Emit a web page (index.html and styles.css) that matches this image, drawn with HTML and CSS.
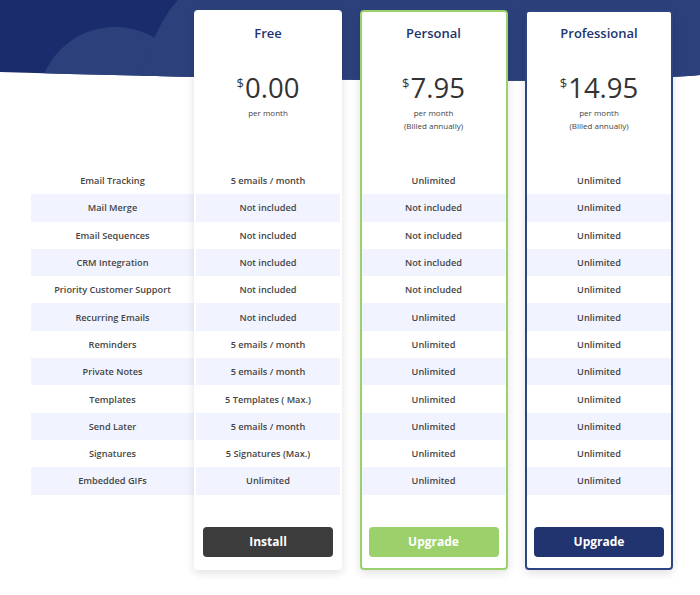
FILE: index.html
```html
<html>
    <head>
        <title>Plans and pricing</title>
        <link rel="stylesheet" href="styles.css">
    </head>
    <body>
        <div class="hero">
            <svg width="700" height="90" viewBox="0 0 700 90">
                <defs>
                    <clipPath id="band">
                        <path d="M0,0 H700 V75 Q560,88 0,72 Z"/>
                    </clipPath>
                </defs>
                <g clip-path="url(#band)">
                    <rect x="0" y="0" width="700" height="90" fill="#1b2c6c"/>
                    <circle cx="115" cy="104" r="77" fill="#2c417b"/>
                    <path d="M178,0 Q152,28 138,90 H700 V0 Z" fill="#2c417b"/>
                </g>
            </svg>
        </div>

        <div class="plans">
            <div class="features">
                <div class="row">Email Tracking</div>
                <div class="row">Mail Merge</div>
                <div class="row">Email Sequences</div>
                <div class="row">CRM Integration</div>
                <div class="row">Priority Customer Support</div>
                <div class="row">Recurring Emails</div>
                <div class="row">Reminders</div>
                <div class="row">Private Notes</div>
                <div class="row">Templates</div>
                <div class="row">Send Later</div>
                <div class="row">Signatures</div>
                <div class="row">Embedded GIFs</div>
            </div>

            <div class="card card-free">
                <div class="head">
                    <h2>Free</h2>
                    <div class="price"><span class="currency">$</span>0.00</div>
                    <div class="period">per month</div>
                </div>
                <div class="row">5 emails / month</div>
                <div class="row">Not included</div>
                <div class="row">Not included</div>
                <div class="row">Not included</div>
                <div class="row">Not included</div>
                <div class="row">Not included</div>
                <div class="row">5 emails / month</div>
                <div class="row">5 emails / month</div>
                <div class="row">5 Templates ( Max.)</div>
                <div class="row">5 emails / month</div>
                <div class="row">5 Signatures (Max.)</div>
                <div class="row">Unlimited</div>
                <div class="foot">
                    <a class="button button-dark">Install</a>
                </div>
            </div>

            <div class="card card-personal">
                <div class="head">
                    <h2>Personal</h2>
                    <div class="price"><span class="currency">$</span>7.95</div>
                    <div class="period">per month</div>
                    <div class="period">(Billed annually)</div>
                </div>
                <div class="row">Unlimited</div>
                <div class="row">Not included</div>
                <div class="row">Not included</div>
                <div class="row">Not included</div>
                <div class="row">Not included</div>
                <div class="row">Unlimited</div>
                <div class="row">Unlimited</div>
                <div class="row">Unlimited</div>
                <div class="row">Unlimited</div>
                <div class="row">Unlimited</div>
                <div class="row">Unlimited</div>
                <div class="row">Unlimited</div>
                <div class="foot">
                    <a class="button button-green">Upgrade</a>
                </div>
            </div>

            <div class="card card-pro">
                <div class="head">
                    <h2>Professional</h2>
                    <div class="price"><span class="currency">$</span>14.95</div>
                    <div class="period">per month</div>
                    <div class="period">(Billed annually)</div>
                </div>
                <div class="row">Unlimited</div>
                <div class="row">Unlimited</div>
                <div class="row">Unlimited</div>
                <div class="row">Unlimited</div>
                <div class="row">Unlimited</div>
                <div class="row">Unlimited</div>
                <div class="row">Unlimited</div>
                <div class="row">Unlimited</div>
                <div class="row">Unlimited</div>
                <div class="row">Unlimited</div>
                <div class="row">Unlimited</div>
                <div class="row">Unlimited</div>
                <div class="foot">
                    <a class="button button-navy">Upgrade</a>
                </div>
            </div>
        </div>
    </body>
</html>
```

FILE: styles.css
```css
body
{
    margin: 0;
    position: relative;
    background-color: #FFFFFF;

    font-family: "Open Sans", "DejaVu Sans", sans-serif;
    color: #444444;
}

/* decorative band behind the cards */
.hero
{
    position: absolute;
    top: 0;
    left: 0;
    z-index: 0;
    line-height: 0;
}

.plans
{
    position: relative;
    z-index: 1;
    display: flex;
    gap: 17.5px;
    padding-top: 10px;
    padding-left: 31px;
}

.features
{
    width: 163px;
    margin-right: -17.5px;
    padding-top: 157px;
}

.row
{
    height: 27.3px;
    display: flex;
    align-items: center;
    justify-content: center;

    font-size: 9.2px;
    font-weight: 600;
    color: #454545;
}

.features .row:nth-child(even)
{
    background-color: #F1F4FE;
}

.card .row:nth-child(odd)
{
    background-color: #F1F4FE;
}

.card
{
    width: 144px;
    border: 2px solid #FFFFFF;
    border-radius: 4px;
    background-color: #FFFFFF;
    box-shadow: 0 3px 10px rgba(0, 0, 0, 0.12);
}

.card-personal
{
    border-color: #9BD06F;
}

.card-pro
{
    border-color: #2F4482;
}

.head
{
    height: 155px;
    display: flex;
    flex-direction: column;
    align-items: center;
}

.head h2
{
    margin: 11px 0 0 0;
    line-height: 20px;

    font-size: 13px;
    font-weight: 600;
    color: #22346F;
}

.price
{
    margin-top: 24px;
    line-height: 32px;

    font-size: 27.5px;
    font-weight: 400;
    color: #333333;
}

.currency
{
    margin-right: 1px;
    vertical-align: 10px;

    font-size: 13px;
}

.period
{
    line-height: 13px;

    font-size: 8px;
    color: #444444;
}

.price + .period
{
    margin-top: 2px;
}

.foot
{
    padding: 32px 7px 11px 7px;
}

.button
{
    display: flex;
    align-items: center;
    justify-content: center;
    height: 30px;
    border-radius: 4px;

    font-size: 12px;
    font-weight: 700;
    color: #FFFFFF;
}

.button-dark
{
    background-color: #3C3C3C;
}

.button-green
{
    background-color: #9BD06B;
}

.button-navy
{
    background-color: #213470;
}
```
